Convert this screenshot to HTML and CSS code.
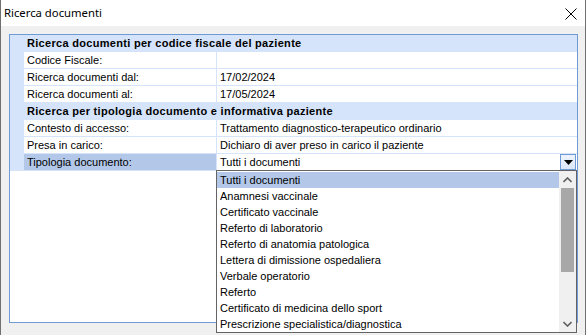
FILE: index.html
```html
<!DOCTYPE html>
<html lang="it">
<head>
  <meta charset="UTF-8" />
  <title>Ricerca documenti</title>
  <link rel="stylesheet" href="styles.css">
</head>
<body>

  <div class="window">
    <!-- Title bar -->
    <div class="titlebar">
      <span class="caption">Ricerca documenti</span>
      <svg class="close" width="12" height="12" viewBox="0 0 12 12">
        <path d="M0.5 0.5 L11.5 11.5 M11.5 0.5 L0.5 11.5" stroke="#000" stroke-width="1" fill="none"/>
      </svg>
    </div>

    <div class="client">
      <!-- Property grid -->
      <div class="grid">
        <div class="category">Ricerca documenti per codice fiscale del paziente</div>
        <div class="row">
          <div class="gutter"></div>
          <div class="label">Codice Fiscale:</div>
          <div class="value"></div>
        </div>
        <div class="row">
          <div class="gutter"></div>
          <div class="label">Ricerca documenti dal:</div>
          <div class="value">17/02/2024</div>
        </div>
        <div class="row">
          <div class="gutter"></div>
          <div class="label">Ricerca documenti al:</div>
          <div class="value">17/05/2024</div>
        </div>

        <div class="category">Ricerca per tipologia documento e informativa paziente</div>
        <div class="row">
          <div class="gutter"></div>
          <div class="label">Contesto di accesso:</div>
          <div class="value">Trattamento diagnostico-terapeutico ordinario</div>
        </div>
        <div class="row">
          <div class="gutter"></div>
          <div class="label">Presa in carico:</div>
          <div class="value">Dichiaro di aver preso in carico il paziente</div>
        </div>
        <div class="row selected">
          <div class="gutter"></div>
          <div class="label">Tipologia documento:</div>
          <div class="value">
            <span>Tutti i documenti</span>
            <span class="drop-btn">
              <svg width="9" height="5" viewBox="0 0 9 5"><path d="M0 0 H9 L4.5 5 Z" fill="#000"/></svg>
            </span>
          </div>
        </div>

        <div class="filler"></div>

        <!-- Open dropdown list -->
        <div class="dropdown">
          <ul class="options">
            <li class="active">Tutti i documenti</li>
            <li>Anamnesi vaccinale</li>
            <li>Certificato vaccinale</li>
            <li>Referto di laboratorio</li>
            <li>Referto di anatomia patologica</li>
            <li>Lettera di dimissione ospedaliera</li>
            <li>Verbale operatorio</li>
            <li>Referto</li>
            <li>Certificato di medicina dello sport</li>
            <li>Prescrizione specialistica/diagnostica</li>
          </ul>
          <div class="scrollbar">
            <div class="arrow">
              <svg width="9" height="6" viewBox="0 0 9 6"><path d="M0.5 5 L4.5 1 L8.5 5" stroke="#606060" stroke-width="1.6" fill="none"/></svg>
            </div>
            <div class="track">
              <div class="thumb"></div>
            </div>
            <div class="arrow">
              <svg width="9" height="6" viewBox="0 0 9 6"><path d="M0.5 1 L4.5 5 L8.5 1" stroke="#606060" stroke-width="1.6" fill="none"/></svg>
            </div>
          </div>
        </div>
      </div>
    </div>
  </div>

</body>
</html>
```

FILE: styles.css
```css
html, body {
  margin: 0;
  height: 100%;
  overflow: hidden;
  background: #ffffff;
}
.window {
  width: 586px;
  height: 100%;
  box-sizing: border-box;
  border-left: 1px solid #707070;
  border-right: 1px solid #707070;
  display: flex;
  flex-direction: column;
  font-family: "Liberation Sans", Arial, sans-serif;
  font-size: 11px;
  color: #000;
}
.titlebar {
  height: 26px;
  background: #fff;
  display: flex;
  align-items: center;
  justify-content: space-between;
  padding: 0 8px 0 3px;
}
.titlebar .caption {
  font-family: "Noto Sans", sans-serif;
  font-size: 11.3px;
  margin-top: -1px;
}
.titlebar .close {
  display: block;
  margin-top: 1px;
}
.client {
  flex: 1;
  background: #f0f0f0;
  padding: 8px 7px 12px 8px;
  display: flex;
  flex-direction: column;
}
.grid {
  flex: 1;
  position: relative;
  background: #fff;
  border: 1px solid #6e9ad6;
  display: flex;
  flex-direction: column;
}
.category {
  height: 16px;
  line-height: 16px;
  background: #d5e4fb;
  border-bottom: 1px solid #d5e4fb;
  font-weight: bold;
  letter-spacing: 0.3px;
  padding-left: 17px;
  white-space: nowrap;
}
.row {
  height: 16px;
  line-height: 16px;
  display: flex;
  border-bottom: 1px solid #d5e4fb;
}
.row .gutter {
  width: 14px;
  background: #d5e4fb;
}
.row .label {
  width: 189px;
  padding-left: 3px;
  border-right: 1px solid #d5e4fb;
  white-space: nowrap;
}
.row .value {
  flex: 1;
  padding-left: 3px;
  display: flex;
  justify-content: space-between;
  white-space: nowrap;
}
.row.selected .label {
  background: #b3c8e9;
}
.drop-btn {
  width: 14px;
  height: 14px;
  margin: 0 1px 0 0;
  border: 1px solid #6f9ad6;
  background: linear-gradient(#eef4fc, #dbe7f8);
  display: flex;
  align-items: center;
  justify-content: center;
}
.drop-btn svg {
  display: block;
}
.filler {
  flex: 1;
}
.dropdown {
  position: absolute;
  left: 206px;
  top: 135px;
  width: 361px;
  height: 163px;
  box-sizing: border-box;
  border: 1px solid #646464;
  background: #fff;
  display: flex;
}
.options {
  list-style: none;
  margin: 0;
  padding: 1px 0 0 0;
  flex: 1;
}
.options li {
  height: 16px;
  line-height: 16px;
  padding-left: 3px;
  white-space: nowrap;
}
.options li.active {
  background: #b3c8e9;
}
.scrollbar {
  width: 17px;
  background: #f0f0f0;
  display: flex;
  flex-direction: column;
}
.scrollbar .arrow {
  height: 17px;
  display: flex;
  align-items: center;
  justify-content: center;
}
.scrollbar .track {
  flex: 1;
  padding: 0 2px;
}
.scrollbar .thumb {
  height: 84px;
  background: #a8a8a8;
}
```
